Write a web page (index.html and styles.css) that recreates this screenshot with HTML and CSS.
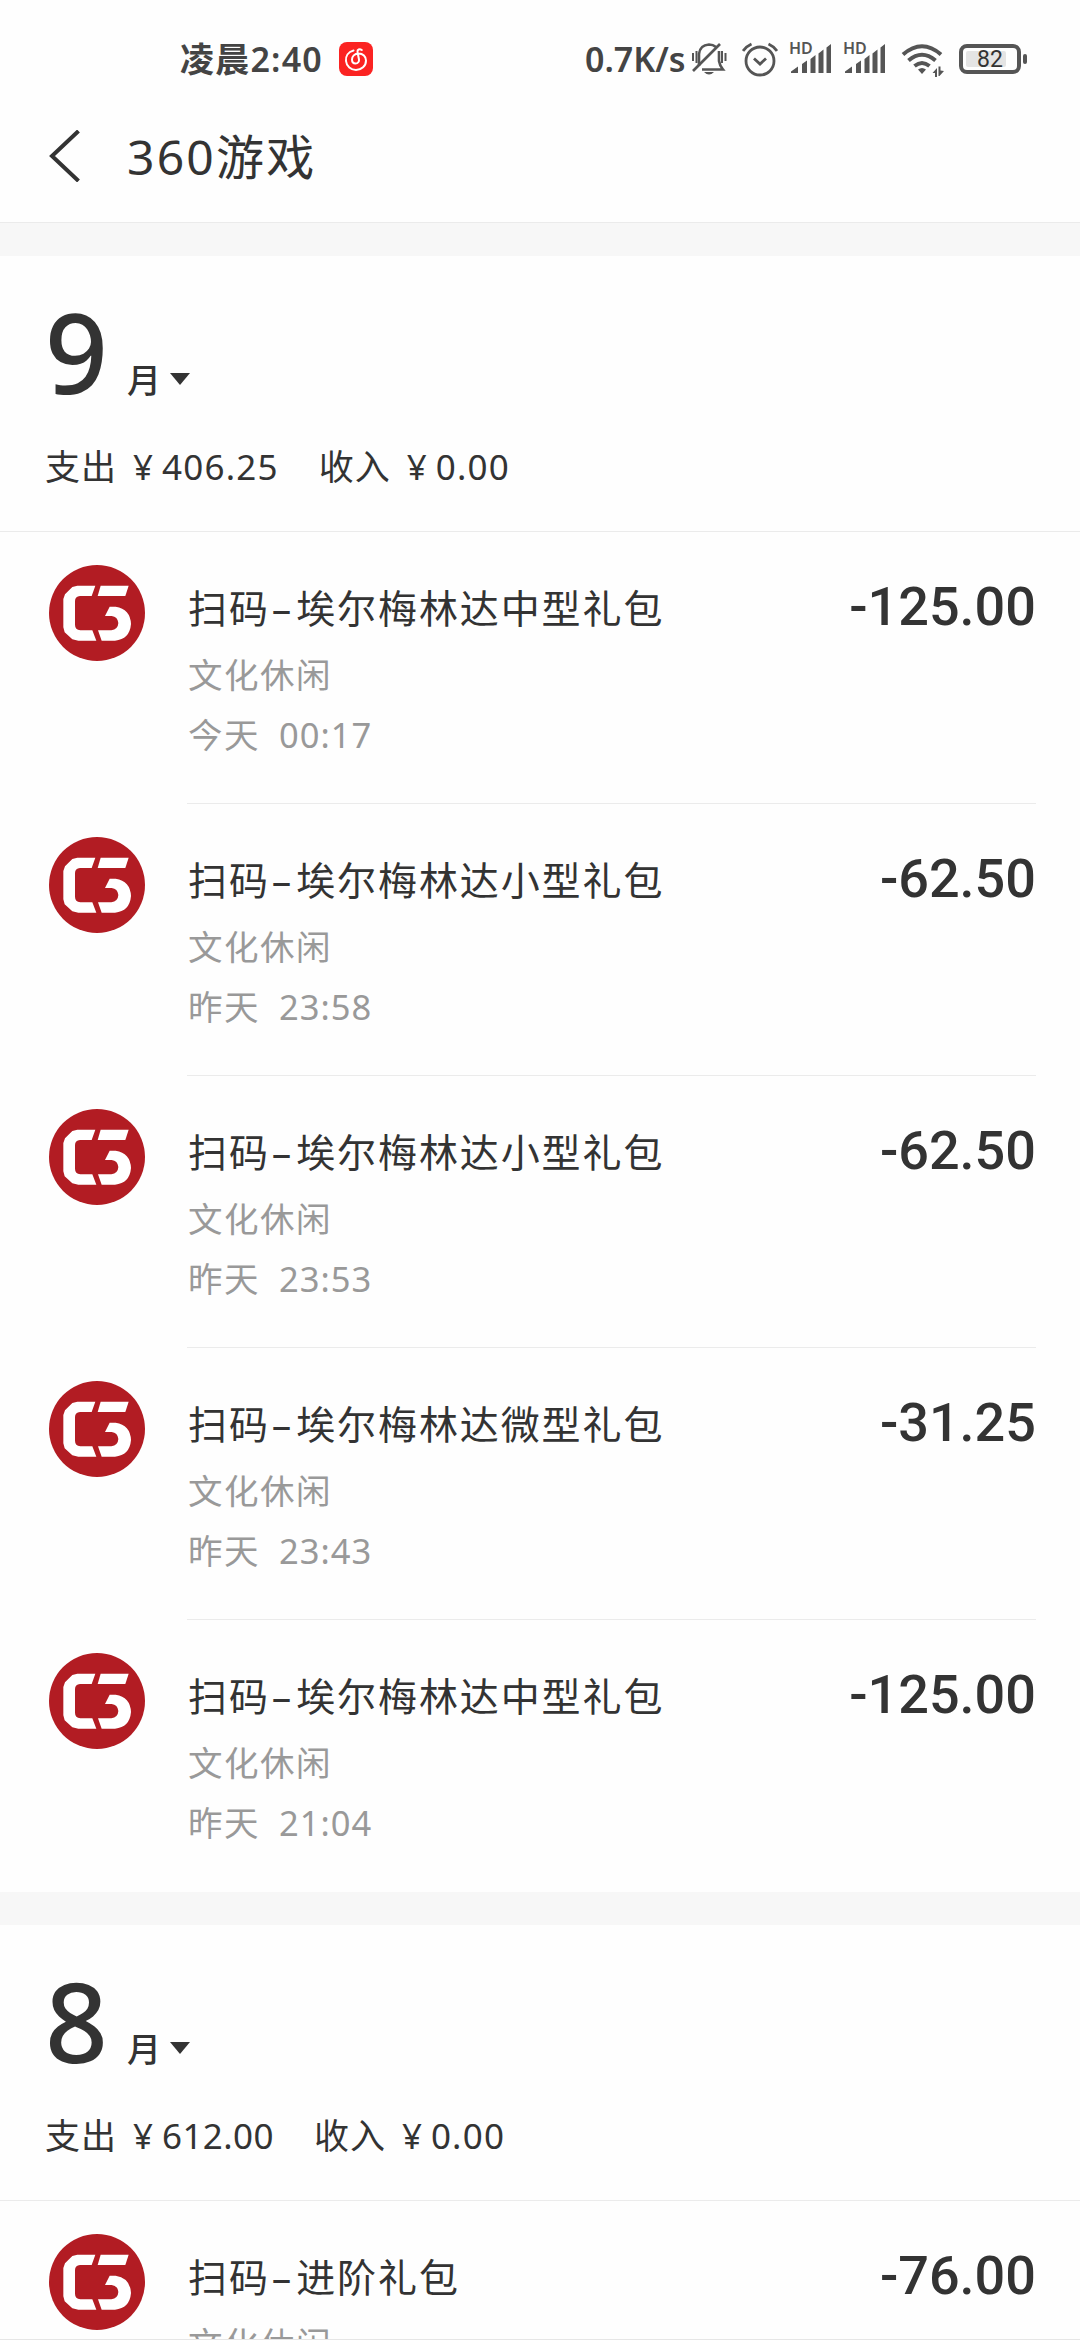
FILE: index.html
```html
<!DOCTYPE html>
<html lang="zh-CN">
<head>
    <meta charset="UTF-8">
    <meta name="viewport" content="width=device-width, initial-scale=1.0">
    <title>360游戏</title>
    <link rel="stylesheet" href="styles.css">
</head>
<body>
    <!-- 商户图标 -->
    <svg class="symbols" width="0" height="0">
        <symbol id="c5" viewBox="0 0 288 288">
            <circle cx="144" cy="144" r="144" fill="#b21c23"/>
            <path fill="#fff" d="M139 62H85L70 66L48 88L43 102V187L47 202L70 223L88 227H142L130 196H94Q78 194 78 179V108Q78 94 93 93H128Z"/>
            <path fill="#fff" d="M155 62H239L229 93H146Z"/>
            <path fill="#fff" d="M182 125H200Q244 132 246 177Q242 223 198 227H158L147 196H187Q207 193 208 174Q206 155 188 153H168Z"/>
        </symbol>
    </svg>

    <div class="status-bar">
        <span class="clock">凌晨2:40</span>
        <svg class="music" viewBox="0 0 34 34">
            <rect width="34" height="34" rx="8" fill="#fb2322"/>
            <path d="M14.500 8.500C9 10 6.500 14.500 7 19C7.500 24.500 12 28 17 28C22.500 28 27 24 27 18.500C27 14.500 24 11.500 19.500 11.500C15.500 11.500 13 14.500 13 17.500C13 20 14.500 21.500 16.500 21.500C19 21.500 20.300 19.500 20 17.500L18.500 10C18.200 7.500 20.500 6.500 22.800 8" fill="none" stroke="#fff" stroke-width="2" stroke-linecap="round"/>
        </svg>
        <div class="status-right">
            <span class="speed">0.7K/s</span>
            <svg class="bell" viewBox="0 0 36 36">
                <path d="M8 25V13Q9 4 18 3.500Q22 3.500 25 6M28 10V20Q28.500 24 32 28.500H11" fill="none" stroke="#555" stroke-width="2.600"/>
                <path d="M2 30L29 3" stroke="#555" stroke-width="2.600"/>
                <path d="M13 31H23Q18 36 13 31ZM1 12h2v8h-2zM4.500 10h2v12h-2zM30 10h2v12h-2zM33.500 12h2v8h-2z"/>
            </svg>
            <svg class="alarm" viewBox="0 0 36 36">
                <g fill="none" stroke="#555" stroke-width="2.800">
                    <circle cx="18" cy="20" r="14"/>
                    <path d="M1 10Q4 5.500 9.500 3M26.500 3Q32 5.500 35 10M12 17.500L18 23L24 17.500"/>
                </g>
            </svg>
            <svg class="signal" viewBox="0 0 42 34">
                <text x="-1" y="12" class="hd">HD</text>
                <path d="M1 31V29.500L8 24.500V31ZM12 31V22L17 18.500V31ZM20.500 31V17L25.500 13V31ZM28.500 31V11.500L33.500 7.500V31ZM36.500 31V5.500L41 2V31Z"/>
            </svg>
            <svg class="signal" viewBox="0 0 42 34">
                <text x="-1" y="12" class="hd">HD</text>
                <path d="M1 31V29.500L8 24.500V31ZM12 31V22L17 18.500V31ZM20.500 31V17L25.500 13V31ZM28.500 31V11.500L33.500 7.500V31ZM36.500 31V5.500L41 2V31Z"/>
            </svg>
            <svg class="wifi" viewBox="0 0 44 36">
                <path d="M2 12.500Q21 -4 40 12.500M7.500 18.500Q21 7 34.500 18.500M13.500 24Q21 18 28.500 24" fill="none" stroke="#555" stroke-width="4"/>
                <path d="M17 27.500Q21 24.500 25 27.500L21 32ZM36 26V35H34V31L31.500 31ZM37.500 24.500H39.500V28.500L43 29L38.500 34H37.500Z"/>
            </svg>
            <svg class="battery" viewBox="0 0 70 32">
                <rect x="2" y="3" width="58" height="26" rx="6" fill="none" stroke="#555" stroke-width="4"/>
                <rect x="7" y="8" width="40" height="16" rx="2" fill="#e4e4e4"/>
                <rect x="64" y="11" width="4" height="10" rx="2"/>
                <text x="31" y="24" text-anchor="middle" class="level">82</text>
            </svg>
        </div>
    </div>

    <div class="header">
        <svg class="back" viewBox="0 0 32 52">
            <path d="M29.500 1L3 26L29.500 51" fill="none" stroke="#333" stroke-width="4"/>
        </svg>
        <h1>360游戏</h1>
    </div>

    <div class="month">
        <div class="month-title">
            <span class="num">9</span>
            <span class="unit">月</span>
            <span class="arrow"></span>
        </div>
        <div class="summary">
            <span class="label">支出</span><span class="yen">¥</span><span class="sum">406.25</span>
            <span class="label">收入</span><span class="yen">¥</span><span class="sum">0.00</span>
        </div>
    </div>
    <div class="list">
        <div class="item">
            <svg class="logo"><use href="#c5"/></svg>
            <div class="detail">
                <div class="name">扫码<span class="dash">–</span>埃尔梅林达中型礼包</div>
                <div class="type">文化休闲</div>
                <div class="time">今天<span>00:17</span></div>
            </div>
            <div class="amount">-125.00</div>
        </div>
        <div class="item">
            <svg class="logo"><use href="#c5"/></svg>
            <div class="detail">
                <div class="name">扫码<span class="dash">–</span>埃尔梅林达小型礼包</div>
                <div class="type">文化休闲</div>
                <div class="time">昨天<span>23:58</span></div>
            </div>
            <div class="amount">-62.50</div>
        </div>
        <div class="item">
            <svg class="logo"><use href="#c5"/></svg>
            <div class="detail">
                <div class="name">扫码<span class="dash">–</span>埃尔梅林达小型礼包</div>
                <div class="type">文化休闲</div>
                <div class="time">昨天<span>23:53</span></div>
            </div>
            <div class="amount">-62.50</div>
        </div>
        <div class="item">
            <svg class="logo"><use href="#c5"/></svg>
            <div class="detail">
                <div class="name">扫码<span class="dash">–</span>埃尔梅林达微型礼包</div>
                <div class="type">文化休闲</div>
                <div class="time">昨天<span>23:43</span></div>
            </div>
            <div class="amount">-31.25</div>
        </div>
        <div class="item">
            <svg class="logo"><use href="#c5"/></svg>
            <div class="detail">
                <div class="name">扫码<span class="dash">–</span>埃尔梅林达中型礼包</div>
                <div class="type">文化休闲</div>
                <div class="time">昨天<span>21:04</span></div>
            </div>
            <div class="amount">-125.00</div>
        </div>
    </div>

    <div class="month">
        <div class="month-title">
            <span class="num">8</span>
            <span class="unit">月</span>
            <span class="arrow"></span>
        </div>
        <div class="summary">
            <span class="label">支出</span><span class="yen">¥</span><span class="sum narrow">612.00</span>
            <span class="label">收入</span><span class="yen">¥</span><span class="sum">0.00</span>
        </div>
    </div>
    <div class="list">
        <div class="item">
            <svg class="logo"><use href="#c5"/></svg>
            <div class="detail">
                <div class="name">扫码<span class="dash">–</span>进阶礼包</div>
                <div class="type">文化休闲</div>
            </div>
            <div class="amount">-76.00</div>
        </div>
    </div>
</body>
</html>
```
FILE: styles.css
```css
* {
    box-sizing: border-box;
}
body {
    margin: 0;
    width: 1080px;
    height: 2340px;
    overflow: hidden;
    background-color: #fefefe;
    border-bottom: 1px solid #e6e6e6;
    color: #333;
    font-family: "Noto Sans", "Noto Sans CJK SC", sans-serif;
    display: flex;
    flex-direction: column;
}
body > div {
    flex-shrink: 0;
}
svg {
    display: block;
    flex-shrink: 0;
    fill: #555;
}
.symbols {
    position: absolute;
}

/* status bar */
.status-bar {
    height: 90px;
    padding: 27px 51px 0 180px;
    display: flex;
    align-items: flex-start;
    color: #444;
    font-weight: 600;
    font-size: 34px;
    line-height: 64px;
    white-space: nowrap;
}
.clock {
    width: 159px;
    letter-spacing: 1.2px;
}
.music {
    width: 34px;
    height: 34px;
    margin-top: 15px;
}
.status-right {
    display: flex;
    margin-left: auto;
}
.speed {
    width: 106px;
}
.bell, .alarm {
    width: 36px;
    height: 36px;
    margin-top: 14px;
}
.alarm {
    margin-left: 15px;
}
.signal {
    width: 42px;
    height: 34px;
    margin: 15px 0 0 12px;
    overflow: visible;
}
.hd {
    font-size: 16px;
    font-weight: 600;
}
.wifi {
    width: 44px;
    height: 36px;
    margin: 15px 0 0 15px;
}
.battery {
    width: 70px;
    height: 32px;
    margin: 16px 0 0 14px;
}
.level {
    font: 400 23px Roboto, sans-serif;
    fill: #333;
}

/* title bar */
.header {
    height: 133px;
    padding: 0 49px;
    display: flex;
    border-bottom: 1px solid #ebebeb;
}
.back {
    width: 32px;
    height: 52px;
    margin-top: 40px;
}
.header h1 {
    margin: 32px 0 0 46px;
    font-size: 48px;
    font-weight: 400;
    line-height: 70px;
    letter-spacing: 2.2px;
}

/* month summary */
.month {
    height: 309px;
    border-top: 33px solid #f7f7f7;
    border-bottom: 1px solid #ebebeb;
    padding: 30px 45px 0;
}
.month-title {
    height: 120px;
    display: flex;
}
.num {
    width: 82px;
    font-size: 110px;
    font-weight: 500;
    line-height: 130px;
}
.unit {
    width: 43px;
    font-size: 34px;
    font-weight: 500;
    line-height: 50px;
    padding-top: 69px;
}
.arrow {
    width: 20px;
    height: 12px;
    margin-top: 87px;
    background-color: #333;
    clip-path: polygon(0 0, 100% 0, 50% 100%);
}
.summary {
    display: flex;
    margin-top: 31px;
    font-size: 35px;
    line-height: 60px;
}
.label {
    width: 88px;
    letter-spacing: 1px;
}
.yen {
    width: 29px;
}
.sum {
    margin-right: 40px;
    letter-spacing: 1.2px;
}
.narrow {
    letter-spacing: 0.4px;
}

/* records */
.item {
    height: 272px;
    padding-left: 49px;
    display: flex;
    position: relative;
}
.item:not(:last-child)::after {
    content: "";
    position: absolute;
    left: 187px;
    right: 44px;
    bottom: 0;
    height: 1px;
    background-color: #ebebeb;
}
.logo {
    width: 96px;
    height: 96px;
    margin-top: 33px;
}
.detail {
    flex: 1;
    margin: 46px 0 0 43px;
}
.name {
    font-size: 39px;
    line-height: 60px;
    letter-spacing: 1.9px;
}
.dash {
    margin: 0 3px 0 2px;
}
.type {
    margin-top: 7px;
}
.type, .time {
    color: #999;
    font-size: 34.5px;
    line-height: 60px;
    letter-spacing: 1.5px;
}
.time span {
    margin-left: 19px;
    letter-spacing: 1px;
}
.amount {
    padding: 45px 44px 0 0;
    font-family: Roboto, sans-serif;
    font-size: 54px;
    font-weight: 500;
    line-height: 60px;
}
/* keeps the last record inside the screen */
.list:last-child .item {
    height: 139px;
    overflow: hidden;
}
```
